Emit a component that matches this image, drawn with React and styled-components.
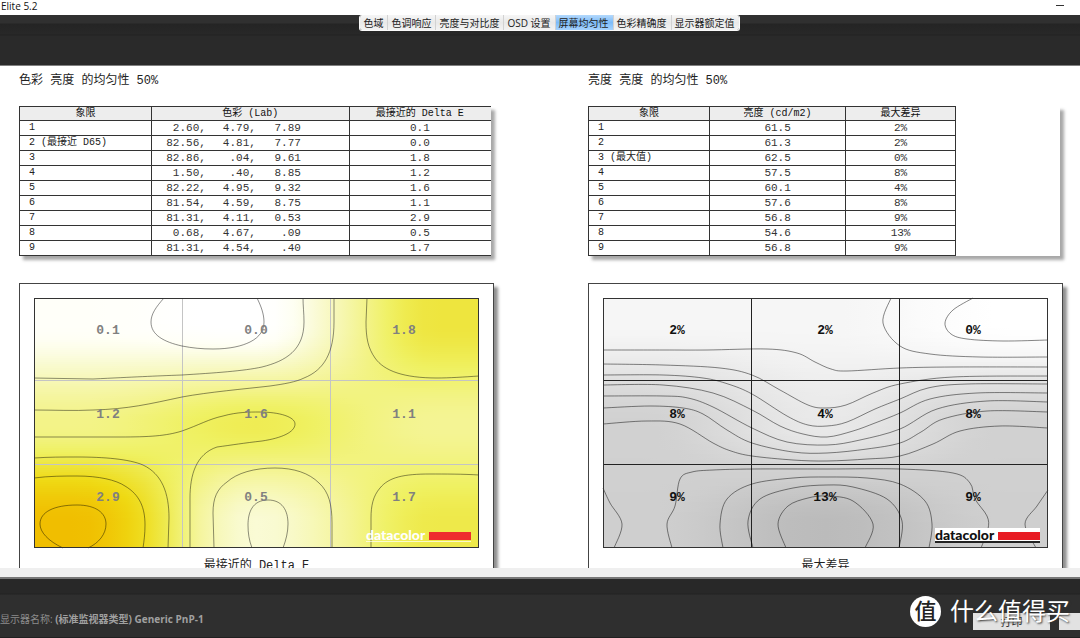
import React from 'react';
import styled, { createGlobalStyle, css } from 'styled-components';

const sans = '"Open Sans", "Noto Sans CJK SC", sans-serif';
const mono = '"Liberation Mono", "Noto Sans CJK SC", monospace';

const GlobalStyle = createGlobalStyle`
  * { box-sizing: border-box; }
  body { margin: 0; background: #fff; color: #222; font-family: ${sans}; }
`;

const Window = styled.div`
  position: relative;
  display: flex;
  flex-direction: column;
  height: 100vh;
  overflow: hidden;
`;

const TitleBar = styled.header`
  display: flex;
  justify-content: space-between;
  flex: none;
  height: 15px;
  padding: 0 16px 0 1px;
  font-size: 10px;
  line-height: 13px;
  font-family: "Open Sans", sans-serif;
  color: #111;
`;

const Minimize = styled.button`
  display: flex;
  align-items: center;
  height: 12px;
  padding: 0;
  border: 0;
  background: none;
`;

const Toolbar = styled.nav`
  display: flex;
  justify-content: center;
  align-items: flex-start;
  flex: none;
  height: 51px;
  padding-left: 19px;
  border-bottom: 1px solid #808080;
  background: linear-gradient(#303030 8px, #242424 9px, #282828 19px, #222 20px, #2a2a2a 21px);
`;

const TabGroup = styled.div`
  display: flex;
  overflow: hidden;
  border: 1px solid #fafafa;
  border-top: 0;
  border-radius: 3px;
`;

const Tab = styled.button`
  height: 15px;
  padding: 0 4px 0 3px;
  border: 0;
  border-left: 1px solid #d2d2d2;
  background: linear-gradient(#f6f6f6, #e9e9e9 50%, #f3f3f3);
  font: 10px/14px ${sans};
  color: #222;
  &:first-child { border-left: 0; }
  ${(p) => p.$active && css`
    background: linear-gradient(#b4d9fc, #7dbbf8 50%, #a6d3ff);
  `}
`;

const Report = styled.main`
  display: grid;
  grid-template-columns: 1fr 1fr;
  column-gap: 94px;
  flex: 1;
  min-height: 0;
  overflow: hidden;
  padding: 7px 17px 0 19px;
  background: #fff;
`;

const Column = styled.section`
  min-width: 0;
`;

const Heading = styled.h2`
  margin: 0 0 17px;
  font: 400 12px/16px ${mono};
  color: #222;
`;

const TablePaper = styled.div`
  margin: 0 3px 27px 0;
  background: #fff;
  box-shadow: 4px 4px 3px #a8a8a8;
`;

const Table = styled.table`
  width: ${(p) => p.$width};
  table-layout: fixed;
  border-collapse: collapse;
  font: 11px/14px ${mono};
  color: #333;
  border-left: 1px solid #333;
`;

const HeadCell = styled.th`
  height: 13px;
  padding: 0;
  border: 1px solid #333;
  border-right-color: ${(p) => (p.$open ? 'transparent' : '#333')};
  background: #ededed;
  font: 400 10px/13px ${mono};
  color: #111;
`;

const Cell = styled.td`
  height: 14px;
  padding: 0;
  border: 1px solid #333;
  border-right-color: ${(p) => (p.$open ? 'transparent' : '#333')};
  text-align: center;
`;

const RowHead = styled.th`
  height: 14px;
  padding: 0 0 0 9px;
  border: 1px solid #333;
  text-align: left;
  font: 400 10px/14px ${mono};
  color: #222;
`;

const Lab = styled.span`
  display: flex;
  padding-left: 4px;
`;

const LabPart = styled.span`
  flex: none;
  width: ${(p) => (p.$last ? '45px' : '50px')};
  text-align: right;
`;

const ChartPaper = styled.figure`
  margin: 0;
  padding: 14px 14px 20px;
  border: 1px solid #444;
  background: #fff;
  box-shadow: 4px 4px 3px #909090;
`;

const Plot = styled.svg`
  display: block;
  width: 100%;
  height: auto;
  overflow: visible;
`;

const PlotLabel = styled.text`
  font: 700 13px ${mono};
  text-anchor: middle;
  fill: ${(p) => p.$color};
`;

const Brand = styled.text`
  font-family: Lato, sans-serif;
  font-weight: 900;
  font-size: 14px;
  fill: ${(p) => p.$color};
`;

const Caption = styled.figcaption`
  margin-top: 10px;
  text-align: center;
  font: 12px/16px ${mono};
  color: #222;
`;

const ScrollStrip = styled.div`
  flex: none;
  height: 11px;
  background: #efefef;
  border-bottom: 2px solid #777;
`;

const StatusBar = styled.footer`
  display: flex;
  justify-content: space-between;
  align-items: flex-end;
  flex: none;
  height: 59px;
  border-bottom: 1px solid #202020;
  background: linear-gradient(#282828 14px, #222 15px, #2f2f2f 16px);
`;

const MonitorName = styled.p`
  margin: 0 0 10px;
  font-size: 10px;
  line-height: 16px;
  color: #8c8c8c;
`;

const MonitorValue = styled.b`
  font-weight: 700;
  color: #a0a0a0;
`;

const Actions = styled.div`
  display: flex;
  gap: 9px;
  padding-bottom: 7px;
`;

const ActionButton = styled.button`
  width: ${(p) => p.$width};
  height: 17px;
  padding: 0;
  border: 0;
  background: #e2e2e2;
  font: 11px/17px ${sans};
  color: #333;
`;

const Watermark = styled.div`
  position: absolute;
  right: 10px;
  bottom: 11px;
  display: flex;
  align-items: center;
  gap: 9px;
  font: 24px/32px ${sans};
  color: #fff;
  text-shadow: 1px 1px 2px #333;
  pointer-events: none;
`;

const Badge = styled.span`
  width: 31px;
  height: 31px;
  border-radius: 50%;
  background: #fff;
  color: #222;
  font-size: 22px;
  line-height: 29px;
  font-weight: 500;
  text-align: center;
  text-shadow: none;
`;

const tabs = ['色域', '色调响应', '亮度与对比度', 'OSD 设置', '屏幕均匀性', '色彩精确度', '显示器额定值'];

const labRows = [
  ['1', ['2.60,', '4.79,', '7.89'], '0.1'],
  ['2 (最接近 D65)', ['82.56,', '4.81,', '7.77'], '0.0'],
  ['3', ['82.86,', '.04,', '9.61'], '1.8'],
  ['4', ['1.50,', '.40,', '8.85'], '1.2'],
  ['5', ['82.22,', '4.95,', '9.32'], '1.6'],
  ['6', ['81.54,', '4.59,', '8.75'], '1.1'],
  ['7', ['81.31,', '4.11,', '0.53'], '2.9'],
  ['8', ['0.68,', '4.67,', '.09'], '0.5'],
  ['9', ['81.31,', '4.54,', '.40'], '1.7'],
];

const lumaRows = [
  ['1', '61.5', '2%'],
  ['2', '61.3', '2%'],
  ['3 (最大值)', '62.5', '0%'],
  ['4', '57.5', '8%'],
  ['5', '60.1', '4%'],
  ['6', '57.6', '8%'],
  ['7', '56.8', '9%'],
  ['8', '54.6', '13%'],
  ['9', '56.8', '9%'],
];

/* ---- contour plots: 445 x 250 units, three samples each way ---- */
const W = 445;
const H = 250;
const nodesX = [40, 222, 403];
const nodesY = [25, 127, 226];

const ease = (t) => t * t * (3 - 2 * t);

function weights(nodes, v) {
  if (v <= nodes[0]) return [1, 0, 0];
  if (v >= nodes[2]) return [0, 0, 1];
  if (v < nodes[1]) {
    const t = ease((v - nodes[0]) / (nodes[1] - nodes[0]));
    return [1 - t, t, 0];
  }
  const t = ease((v - nodes[1]) / (nodes[2] - nodes[1]));
  return [0, 1 - t, t];
}

function sample(values, x, y) {
  const wx = weights(nodesX, x);
  const wy = weights(nodesY, y);
  return values.reduce((sum, row, j) => sum + wy[j] * row.reduce((s, v, i) => s + wx[i] * v, 0), 0);
}

function colorAt(scale, v) {
  let k = 1;
  while (k < scale.length - 1 && v > scale[k][0]) k += 1;
  const [v0, a] = scale[k - 1];
  const [v1, b] = scale[k];
  const t = Math.max(0, Math.min(1, (v - v0) / (v1 - v0)));
  return `rgb(${a.map((c, i) => Math.round(c + (b[i] - c) * t)).join(',')})`;
}

function buildStrips(values, scale) {
  const strips = [];
  for (let y = 0; y < H; y += 2) {
    const stops = [];
    for (let i = 0; i <= 24; i += 1) stops.push(colorAt(scale, sample(values, (i / 24) * W, y + 1)));
    strips.push({ y, stops });
  }
  return strips;
}

/* Smooth curve through a list of points. */
function curve(points) {
  let d = `M${points[0][0]} ${points[0][1]}`;
  for (let i = 0; i < points.length - 1; i += 1) {
    const p0 = points[i - 1] || points[i];
    const p1 = points[i];
    const p2 = points[i + 1];
    const p3 = points[i + 2] || p2;
    d += `C${p1[0] + (p2[0] - p0[0]) / 6} ${p1[1] + (p2[1] - p0[1]) / 6} ${p2[0] - (p3[0] - p1[0]) / 6} ${p2[1] - (p3[1] - p1[1]) / 6} ${p2[0]} ${p2[1]}`;
  }
  return d;
}

const deltaPlot = {
  id: 'delta',
  strips: buildStrips(
    [[0.1, -0.02, 1.8], [1.2, 1.62, 1.1], [2.9, 0.45, 1.7]],
    [
      [0, [255, 255, 255]],
      [0.15, [255, 255, 246]],
      [0.5, [249, 250, 208]],
      [1.1, [244, 244, 148]],
      [1.5, [239, 241, 98]],
      [1.8, [238, 229, 62]],
      [2.2, [239, 218, 20]],
      [2.9, [240, 190, 0]],
    ],
  ),
  labels: [['0.1', '0.0', '1.8'], ['1.2', '1.6', '1.1'], ['2.9', '0.5', '1.7']],
  labelColor: '#808080',
  grid: '#c4c4c4',
  line: '#00000070',
  contours: [
    'M130 0C122 9 117 16 117 24C117 37 130 44 148 48C158 50 168 51 179 51C196 51 208 48 216 44C226 39 230 32 230 24C230 16 227 8 223 0',
    'M0 80L59 81C100 79 120 78 148 77C180 75 210 73 228 69C252 63 270 52 270 24C270 15 269 8 269 0',
    'M0 112C20 112 40 113 59 112C95 111 115 106 148 99C175 94 210 91 236 88C250 86 262 84 270 80C290 72 300 55 300 24L300 0',
    'M0 139H86C115 139 132 138 148 133C165 127 175 121 189 118C203 114 216 114 225 114C246 114 261 119 261 126C261 134 248 140 228 143C210 145 198 147 183 149C162 156 156 177 156 200V250',
    'M0 160C15 159 28 159 43 159C70 159 95 161 109 167C128 176 135 195 135 220C135 230 134 240 134 250',
    'M0 180C15 178 30 178 43 178C65 178 82 182 91 188C106 197 111 210 111 227C111 236 110 243 109 250',
    'M29 250C14 243 6 234 6 226C6 214 20 207 43 207C62 207 72 215 72 226C72 236 65 245 54 250',
    'M180 250L179 215C179 200 183 191 193 184C203 175 220 170 241 170C260 170 275 175 285 185C295 194 298 207 298 225V250',
    'M218 250C215 242 214 235 214 227C214 215 218 202 234 202C248 202 254 212 254 226C254 234 252 242 249 250',
    'M333 0L332 24C332 40 334 50 341 60C350 73 370 80 403 80C415 80 430 79 445 78',
    'M337 250V220C337 208 339 198 346 190C355 179 370 176 396 176C410 176 430 176 445 177',
  ],
};

const lumaPlot = {
  id: 'luma',
  strips: buildStrips(
    [[2, 2, 0], [8, 4, 8], [9, 13, 9]],
    [
      [0, [255, 255, 255]],
      [2, [246, 246, 246]],
      [4, [233, 233, 233]],
      [8, [209, 209, 209]],
      [9, [207, 207, 207]],
      [13, [187, 187, 187]],
    ],
  ),
  labels: [['2%', '2%', '0%'], ['8%', '4%', '8%'], ['9%', '13%', '9%']],
  labelColor: '#111',
  grid: '#222',
  line: '#00000078',
  contours: [
    [[0, 52], [60, 52], [104, 52], [164, 51], [194, 55], [212, 64], [228, 71], [244, 73], [297, 70], [350, 69], [445, 69]],
    [[0, 66], [60, 67], [117, 70], [149, 77], [177, 92], [205, 107], [222, 110], [243, 107], [270, 95], [297, 86], [350, 79], [445, 78]],
    [[0, 77], [60, 77], [100, 80], [125, 86], [149, 96], [184, 118], [205, 127], [224, 128], [244, 124], [272, 111], [297, 101], [325, 90], [364, 86], [445, 86]],
    [[0, 87], [60, 87], [110, 95], [149, 112], [177, 128], [200, 136], [224, 139], [250, 133], [272, 125], [297, 115], [327, 101], [374, 95], [445, 95]],
    [[0, 98], [60, 98], [85, 100], [110, 109], [149, 130], [184, 144], [224, 147], [257, 142], [297, 131], [334, 111], [384, 103], [445, 104]],
    [[0, 110], [47, 108], [80, 110], [100, 116], [124, 132], [149, 145], [190, 154], [224, 155], [264, 151], [297, 145], [318, 134], [340, 121], [384, 113], [445, 114]],
    [[0, 126], [44, 123], [77, 126], [110, 145], [128, 153], [149, 158], [190, 162], [224, 163], [264, 161], [297, 158], [330, 146], [357, 133], [397, 128], [445, 130]],
    [[69, 250], [64, 226], [72, 208], [77, 181], [89, 174], [110, 172], [150, 171], [224, 171], [297, 171], [350, 175], [367, 185], [372, 201], [384, 218], [385, 231], [378, 250]],
    [[120, 250], [117, 226], [124, 201], [149, 186], [190, 180], [224, 179], [264, 180], [297, 186], [322, 203], [329, 226], [326, 250]],
    [[150, 250], [145, 223], [157, 201], [190, 190], [224, 187], [250, 189], [284, 201], [299, 223], [296, 250]],
    [[183, 250], [175, 226], [185, 208], [205, 200], [224, 198], [250, 203], [270, 226], [262, 250]],
    [[0, 190], [7, 205], [19, 226], [11, 250]],
    [[445, 192], [434, 208], [422, 226], [433, 250]],
    [[288, 0], [280, 25], [297, 48], [327, 56], [377, 59], [445, 59]],
    [[370, 0], [350, 12], [342, 25], [348, 36], [364, 41], [400, 43], [445, 42]],
  ].map(curve),
};

function Datacolor({ dark }) {
  return (
    <g>
      {dark && <rect x="332" y="230" width="105" height="13" fill="#fff" />}
      <Brand x="332" y="242" $color={dark ? '#111' : '#fff'}>datacolor</Brand>
      <rect x="395" y="234" width="42" height="8" fill={dark ? '#e81c24' : '#ee2c2e'} />
      <rect x="332" y="243" width="105" height={dark ? 2 : 1} fill={dark ? '#222' : '#ffffffb0'} />
    </g>
  );
}

function ContourPlot({ plot, dark }) {
  return (
    <Plot viewBox={`0 0 ${W} ${H}`}>
      <defs>
        {plot.strips.map((s) => (
          <linearGradient key={s.y} id={`${plot.id}-${s.y}`}>
            {s.stops.map((c, i) => <stop key={i} offset={i / 24} stopColor={c} />)}
          </linearGradient>
        ))}
      </defs>
      {plot.strips.map((s) => (
        <rect key={s.y} y={s.y} width={W} height="2" fill={`url(#${plot.id}-${s.y})`} shapeRendering="crispEdges" />
      ))}
      <path d="M148.5 0V250M296.5 0V250M0 82.5H445M0 166.5H445" stroke={plot.grid} fill="none" />
      {plot.contours.map((d) => <path key={d} d={d} stroke={plot.line} fill="none" />)}
      <rect x="0.5" y="0.5" width="444" height="249" stroke="#333" fill="none" />
      {plot.labels.map((row, j) => row.map((t, i) => (
        <PlotLabel key={`${i}-${j}`} x={74 + i * 148} y={[36, 120, 203][j]} $color={plot.labelColor}>{t}</PlotLabel>
      )))}
      <Datacolor dark={dark} />
    </Plot>
  );
}

export default function App() {
  return (
    <>
      <GlobalStyle />
      <Window>
        <TitleBar>
          <span>Elite 5.2</span>
          <Minimize aria-label="最小化">
            <svg width="8" height="2"><rect width="8" height="1" fill="#333" /></svg>
          </Minimize>
        </TitleBar>
        <Toolbar>
          <TabGroup>
            {tabs.map((t) => <Tab key={t} $active={t === '屏幕均匀性'}>{t}</Tab>)}
          </TabGroup>
        </Toolbar>
        <Report>
          <Column>
            <Heading>色彩 亮度 的均匀性 50%</Heading>
            <TablePaper>
              <Table $width="100%">
                <colgroup>
                  <col width="28%" />
                  <col width="42%" />
                  <col width="30%" />
                </colgroup>
                <thead>
                  <tr>
                    <HeadCell>象限</HeadCell>
                    <HeadCell>色彩 (Lab)</HeadCell>
                    <HeadCell $open>最接近的 Delta E</HeadCell>
                  </tr>
                </thead>
                <tbody>
                  {labRows.map(([name, lab, delta]) => (
                    <tr key={name}>
                      <RowHead scope="row">{name}</RowHead>
                      <Cell>
                        <Lab>
                          {lab.map((v, i) => <LabPart key={i} $last={i === 2}>{v}</LabPart>)}
                        </Lab>
                      </Cell>
                      <Cell $open>{delta}</Cell>
                    </tr>
                  ))}
                </tbody>
              </Table>
            </TablePaper>
            <ChartPaper>
              <ContourPlot plot={deltaPlot} />
              <Caption>最接近的 Delta E</Caption>
            </ChartPaper>
          </Column>
          <Column>
            <Heading>亮度 亮度 的均匀性 50%</Heading>
            <TablePaper>
              <Table $width="78%">
                <colgroup>
                  <col width="33%" />
                  <col width="37%" />
                  <col width="30%" />
                </colgroup>
                <thead>
                  <tr>
                    <HeadCell>象限</HeadCell>
                    <HeadCell>亮度 (cd/m2)</HeadCell>
                    <HeadCell>最大差异</HeadCell>
                  </tr>
                </thead>
                <tbody>
                  {lumaRows.map(([name, luma, diff]) => (
                    <tr key={name}>
                      <RowHead scope="row">{name}</RowHead>
                      <Cell>{luma}</Cell>
                      <Cell>{diff}</Cell>
                    </tr>
                  ))}
                </tbody>
              </Table>
            </TablePaper>
            <ChartPaper>
              <ContourPlot plot={lumaPlot} dark />
              <Caption>最大差异</Caption>
            </ChartPaper>
          </Column>
        </Report>
        <ScrollStrip />
        <StatusBar>
          <MonitorName>
            显示器名称: <MonitorValue>(标准监视器类型) Generic PnP-1</MonitorValue>
          </MonitorName>
          <Actions>
            <ActionButton $width="77px">打印</ActionButton>
            <ActionButton $width="21px" aria-label="更多" />
          </Actions>
        </StatusBar>
        <Watermark>
          <Badge>值</Badge>
          <span>什么值得买</span>
        </Watermark>
      </Window>
    </>
  );
}
